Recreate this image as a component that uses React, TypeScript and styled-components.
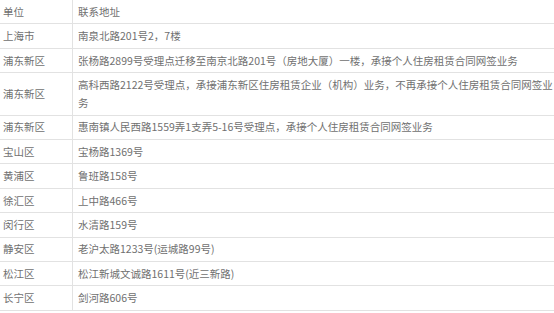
import React from "react";
import styled, { createGlobalStyle } from "styled-components";

const Global = createGlobalStyle`
  html, body { margin: 0; padding: 0; background: #fff; }
  body { font-family: "Noto Sans CJK SC", "Noto Sans", sans-serif; }
`;

const Table = styled.div`
  width: 554px;
  display: flex;
  flex-direction: column;
  font-size: 10.5px;
  line-height: 18px;
  color: #707070;
`;

const Row = styled.div`
  display: grid;
  grid-template-columns: 73px 1fr;
  border-bottom: 1px solid #e2e2e2;
`;

const Cell = styled.div<{ $first?: boolean }>`
  padding: 2.7px ${(p) => (p.$first ? "4px" : "0px")} 2.72px
    ${(p) => (p.$first ? "3px" : "5px")};
  border-right: ${(p) => (p.$first ? "1px solid #e2e2e2" : "none")};
  display: flex;
  align-items: center;
`;

const rows: [string, string][] = [
  ["单位", "联系地址"],
  ["上海市", "南泉北路201号2，7楼"],
  ["浦东新区", "张杨路2899号受理点迁移至南京北路201号（房地大厦）一楼，承接个人住房租赁合同网签业务"],
  ["浦东新区", "高科西路2122号受理点，承接浦东新区住房租赁企业（机构）业务，不再承接个人住房租赁合同网签业务"],
  ["浦东新区", "惠南镇人民西路1559弄1支弄5-16号受理点，承接个人住房租赁合同网签业务"],
  ["宝山区", "宝杨路1369号"],
  ["黄浦区", "鲁班路158号"],
  ["徐汇区", "上中路466号"],
  ["闵行区", "水清路159号"],
  ["静安区", "老沪太路1233号(运城路99号)"],
  ["松江区", "松江新城文诚路1611号(近三新路)"],
  ["长宁区", "剑河路606号"],
];

export default function App() {
  return (
    <>
      <Global />
      <Table>
        {rows.map(([a, b], i) => (
          <Row key={i}>
            <Cell $first>{a}</Cell>
            <Cell>{b}</Cell>
          </Row>
        ))}
      </Table>
    </>
  );
}
